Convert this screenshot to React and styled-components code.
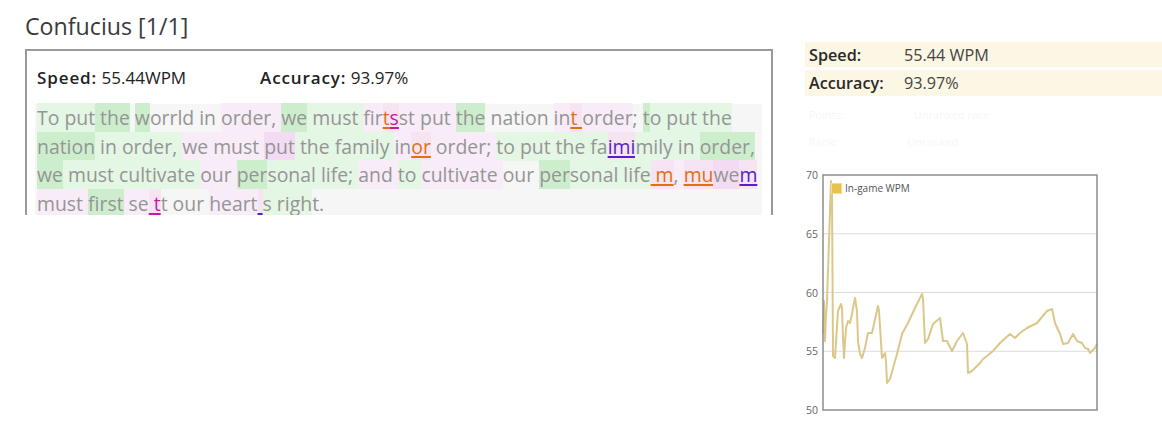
import React from "react";
import styled, { createGlobalStyle } from "styled-components";

const Global = createGlobalStyle`
  html, body { margin: 0; padding: 0; background: #ffffff; }
  body { font-family: "Open Sans", "Noto Sans", sans-serif; color: #333; }
`;

const Page = styled.div`
  display: flex;
  align-items: flex-start;
  width: 1162px;
  height: 431px;
  overflow: hidden;
`;

const LeftCol = styled.div`
  margin-left: 25px;
  width: 748px;
  display: flex;
  flex-direction: column;
`;

const Title = styled.h2`
  margin: 0;
  padding-top: 11px;
  height: 49px;
  box-sizing: border-box;
  font-size: 23.2px;
  line-height: 30px;
  font-weight: 400;
  color: #3a3a3a;
`;

const Box = styled.div`
  box-sizing: border-box;
  height: 166px;
  border: 2px solid #9a9a9a;
  border-bottom: none;
  padding: 0 9px 0 8px;
  overflow: hidden;
`;

const StatsRow = styled.div`
  display: flex;
  height: 53px;
  align-items: center;
  padding-left: 2px;
  font-size: 17px;
  color: #222;
`;

const Stat = styled.div`
  width: ${(p) => p.$w || "auto"};
  white-space: nowrap;
  b { font-weight: 600; letter-spacing: 0.9px; }
`;

const TextArea = styled.div`
  background: #f6f6f6;
  padding: 0 2px;
  font-size: 19.4px;
  line-height: 28.5px;
  color: #959595;
`;

const Line = styled.div`
  white-space: pre;
`;

const bgs = {
  n: "transparent",
  g: "#e4f6e4",
  G: "#cdeecd",
  p: "#f8ecf8",
  P: "#f3dcf3",
};

const Seg = styled.span`
  background: ${(p) => bgs[p.$k]};
  padding: 1px 0;
`;

const errColors = { o: "#e07010", u: "#5a1ec8", m: "#c8189e" };

const Err = styled.span`
  background: #f6e4f3;
  padding: 1px 0;
  color: ${(p) => errColors[p.$c]};
  text-decoration: underline;
  text-decoration-thickness: 2px;
  text-underline-offset: 2px;
  font-weight: 500;
`;

const lines = [
  [
    ["To put", "g"], [" the", "G"], [" ", "n"], ["w", "G"], ["orrld in ", "n"], ["order, ", "p"],
    ["we", "G"], [" must ", "g"], ["fir", "p"], ["t", "!o"], ["s", "!m"], ["st put ", "p"],
    ["the", "G"], [" nation ", "n"], ["in", "p"], ["t ", "!o"], ["order", "p"], ["; ", "n"],
    ["t", "G"], ["o put the", "g"],
  ],
  [
    ["nation", "G"], [" in order, ", "g"], ["we must ", "p"], ["put", "P"], [" the family ", "g"],
    ["in", "p"], ["or", "!o"], [" order; ", "p"], ["to put the fa", "g"], ["imi", "!u"],
    ["mily in ", "g"], ["order,", "G"],
  ],
  [
    ["we", "G"], [" must cultivate ", "g"], ["our ", "p"], ["per", "G"], ["sonal life; ", "g"],
    ["and ", "p"], ["to ", "g"], ["cultivate ", "p"], ["our ", "n"], ["per", "G"],
    ["sonal life", "g"], [" m", "!o"], [", ", "p"], ["mu", "!o"], ["we", "P"], ["m", "!u"],
  ],
  [
    ["must ", "p"], ["first", "G"], [" se", "p"], [" t", "!m"], ["t our ", "n"], ["heart", "p"],
    [" ", "!u"], ["s righ", "g"], ["t.", "n"],
  ],
];

const RightCol = styled.div`
  margin-left: 32px;
  flex: 1;
  display: flex;
  flex-direction: column;
  padding-top: 42px;
`;

const TableRow = styled.div`
  display: flex;
  align-items: center;
  height: ${(p) => p.$h}px;
  margin-bottom: 3px;
  background: #fcf7e4;
  padding-left: 4px;
  font-size: 16.2px;
  color: #333;
`;

const Label = styled.div`
  width: 95px;
  font-weight: 600;
  color: #2a2a2a;
`;

const Value = styled.div`
  color: #444;
`;

const Ghost = styled.div`
  height: 66px;
  padding: 8px 0 0 4px;
  box-sizing: border-box;
  display: flex;
  flex-direction: column;
  gap: 12px;
  font-size: 11px;
  color: #f6f6f6;
`;

const GhostRow = styled.div`
  display: flex;
  gap: 70px;
`;

const pts = [
  [823, 333], [824, 300], [825, 340], [826, 315], [827, 300], [829, 240], [831, 180], [832, 192],
  [833, 355], [835, 357], [838, 310], [841, 303], [842, 307], [843, 337], [844, 357], [846, 327],
  [848, 320], [850, 322], [852, 313], [853, 307], [855, 297], [857, 310], [858, 340], [860, 353],
  [862, 357], [865, 347], [868, 332], [872, 332], [878, 305], [879, 310], [882, 357], [885, 352],
  [886, 360], [887, 382], [890, 378], [897, 353], [902, 333], [908, 322], [915, 307], [920, 297],
  [922, 293], [923, 298], [925, 342], [928, 338], [933, 323], [940, 317], [943, 340], [947, 340],
  [952, 350], [957, 340], [963, 332], [967, 343], [968, 372], [972, 370], [980, 362], [983, 358],
  [987, 355], [993, 350], [1000, 342], [1010, 333], [1015, 337], [1020, 332], [1027, 327],
  [1037, 322], [1047, 310], [1052, 308], [1055, 322], [1060, 333], [1063, 343], [1068, 342],
  [1073, 333], [1077, 340], [1082, 342], [1085, 347], [1088, 348], [1090, 352], [1095, 347],
  [1097, 343],
];

const ChartSvg = styled.svg`
  display: block;
  margin-left: -5px;
  margin-top: 1px;
`;

function Chart() {
  const ox = 800;
  const oy = 165;
  const x0 = 823 - ox;
  const x1 = 1097 - ox;
  const yOf = (v) => 409 - oy - (v - 50) * 11.75;
  const d = pts.map(([x, y], i) => `${i ? "L" : "M"}${x - ox},${y - oy}`).join(" ");
  return (
    <ChartSvg width="310" height="255" viewBox="0 0 310 255">
      {[65, 60, 55].map((v) => (
        <line key={v} x1={x0} x2={x1} y1={yOf(v)} y2={yOf(v)} stroke="#dcdcdc" strokeWidth="1" />
      ))}
      {[70, 65, 60, 55, 50].map((v) => (
        <text key={v} x={x0 - 5} y={yOf(v) + 4} textAnchor="end" fontSize="10.5" fill="#666"
          fontFamily="Open Sans, sans-serif">{v}</text>
      ))}
      <path d={d} fill="none" stroke="#dcc78a" strokeWidth="2" strokeLinejoin="round" />
      <rect x={x0} y={yOf(70)} width={x1 - x0} height={yOf(50) - yOf(70)} fill="none"
        stroke="#8d8d8d" strokeWidth="1.5" />
      <rect x={31.5} y={17.5} width="10" height="10" fill="#e8c24a" stroke="#f3dc95" strokeWidth="1" />
      <text x={45} y={26} fontSize="10" fill="#555" fontFamily="Open Sans, sans-serif">In-game WPM</text>
    </ChartSvg>
  );
}

export default function App() {
  return (
    <>
      <Global />
      <Page>
        <LeftCol>
          <Title>Confucius [1/1]</Title>
          <Box>
            <StatsRow>
              <Stat $w="223px"><b>Speed:</b> 55.44WPM</Stat>
              <Stat><b>Accuracy:</b> 93.97%</Stat>
            </StatsRow>
            <TextArea>
              {lines.map((segs, i) => (
                <Line key={i}>
                  {segs.map(([t, k], j) =>
                    k[0] === "!" ? (
                      <Err key={j} $c={k[1]}>{t}</Err>
                    ) : (
                      <Seg key={j} $k={k}>{t}</Seg>
                    )
                  )}
                </Line>
              ))}
            </TextArea>
          </Box>
        </LeftCol>
        <RightCol>
          <TableRow $h={25}>
            <Label>Speed:</Label>
            <Value>55.44 WPM</Value>
          </TableRow>
          <TableRow $h={26}>
            <Label>Accuracy:</Label>
            <Value>93.97%</Value>
          </TableRow>
          <Ghost>
            <GhostRow><span>Points:</span><span>Unranked race</span></GhostRow>
            <GhostRow><span>Rank:</span><span>Unranked</span></GhostRow>
          </Ghost>
          <Chart />
        </RightCol>
      </Page>
    </>
  );
}
